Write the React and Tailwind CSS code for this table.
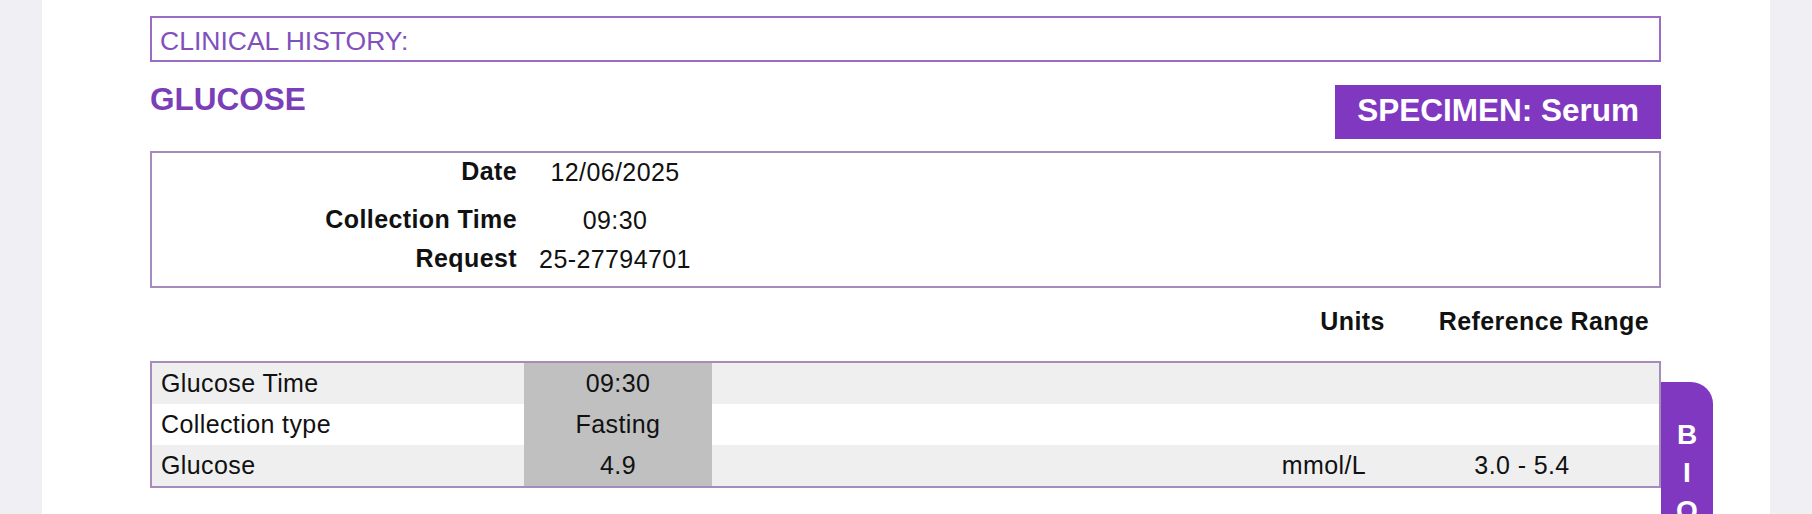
import React from "react";

function InfoRow({ label, value, h }) {
  return (
    <div className={`flex items-start ${h}`}>
      <div className="w-[365px] text-right font-bold leading-[29px]">{label}</div>
      <div className="ml-[10px] w-[176px] text-center leading-[29px] pt-[1px]">{value}</div>
    </div>
  );
}

function TableRow({ label, value, units, range, bg }) {
  return (
    <div className={`flex h-[41px] items-stretch ${bg}`}>
      <div className="flex w-[372px] items-center pl-[9px] leading-[29px]">{label}</div>
      <div className="flex w-[188px] items-center justify-center bg-[#c0c0c0] leading-[29px]">{value}</div>
      <div className="flex-1" />
      <div className="flex w-[176px] items-center justify-center leading-[29px]">{units}</div>
      <div className="flex w-[220px] items-center justify-center leading-[29px]">{range}</div>
      <div className="w-[27px]" />
    </div>
  );
}

export default function App() {
  return (
    <div className="flex h-[514px] w-full overflow-hidden bg-[#f0f0f4] font-['Liberation_Sans','Arial',sans-serif] text-[#111]">
      <div className="w-[42px] shrink-0" />
      <div className="relative w-[1728px] shrink-0 bg-white pl-[108px] pr-[109px] pt-[16px]">
        <div className="h-[46px] border-2 border-[#9a6cc4] pl-[8px] pt-[8px] text-[26.5px] leading-[30px] text-[#8150bd]">
          CLINICAL HISTORY:
        </div>

        <div className="mt-[19px] flex items-start justify-between">
          <div className="text-[31.5px] font-bold leading-[36px] text-[#7a3eb8]">GLUCOSE</div>
          <div className="mt-[4px] flex h-[54px] items-center bg-[#8038c1] px-[22px] pb-[3px] text-[31.5px] font-bold leading-none text-white">
            SPECIMEN: Serum
          </div>
        </div>

        <div className="mt-[12px] border-2 border-[#a58cba] pt-[4px] pb-[13px] text-[25px] tracking-[0.4px]">
          <InfoRow label="Date" value="12/06/2025" h="h-[48px]" />
          <InfoRow label="Collection Time" value="09:30" h="h-[39px]" />
          <InfoRow label="Request" value="25-27794701" h="h-[29px]" />
        </div>

        <div className="mt-[19px] flex justify-end gap-[54px] pr-[12px] text-[25px] font-bold leading-[29px] tracking-[0.4px]">
          <span>Units</span>
          <span>Reference Range</span>
        </div>

        <div className="mt-[25px] border-2 border-[#a58cba] text-[25px] tracking-[0.4px]">
          <TableRow label="Glucose Time" value="09:30" units="" range="" bg="bg-[#efefef]" />
          <TableRow label="Collection type" value="Fasting" units="" range="" bg="bg-white" />
          <TableRow label="Glucose" value="4.9" units="mmol/L" range="3.0 - 5.4" bg="bg-[#efefef]" />
        </div>

        <div className="absolute left-[1619px] top-[382px] flex h-[200px] w-[52px] flex-col items-center rounded-tr-[22px] bg-[#8038c1] pt-[34px] text-[28px] font-bold leading-[38px] text-white">
          <span>B</span>
          <span>I</span>
          <span>O</span>
        </div>
      </div>
    </div>
  );
}
